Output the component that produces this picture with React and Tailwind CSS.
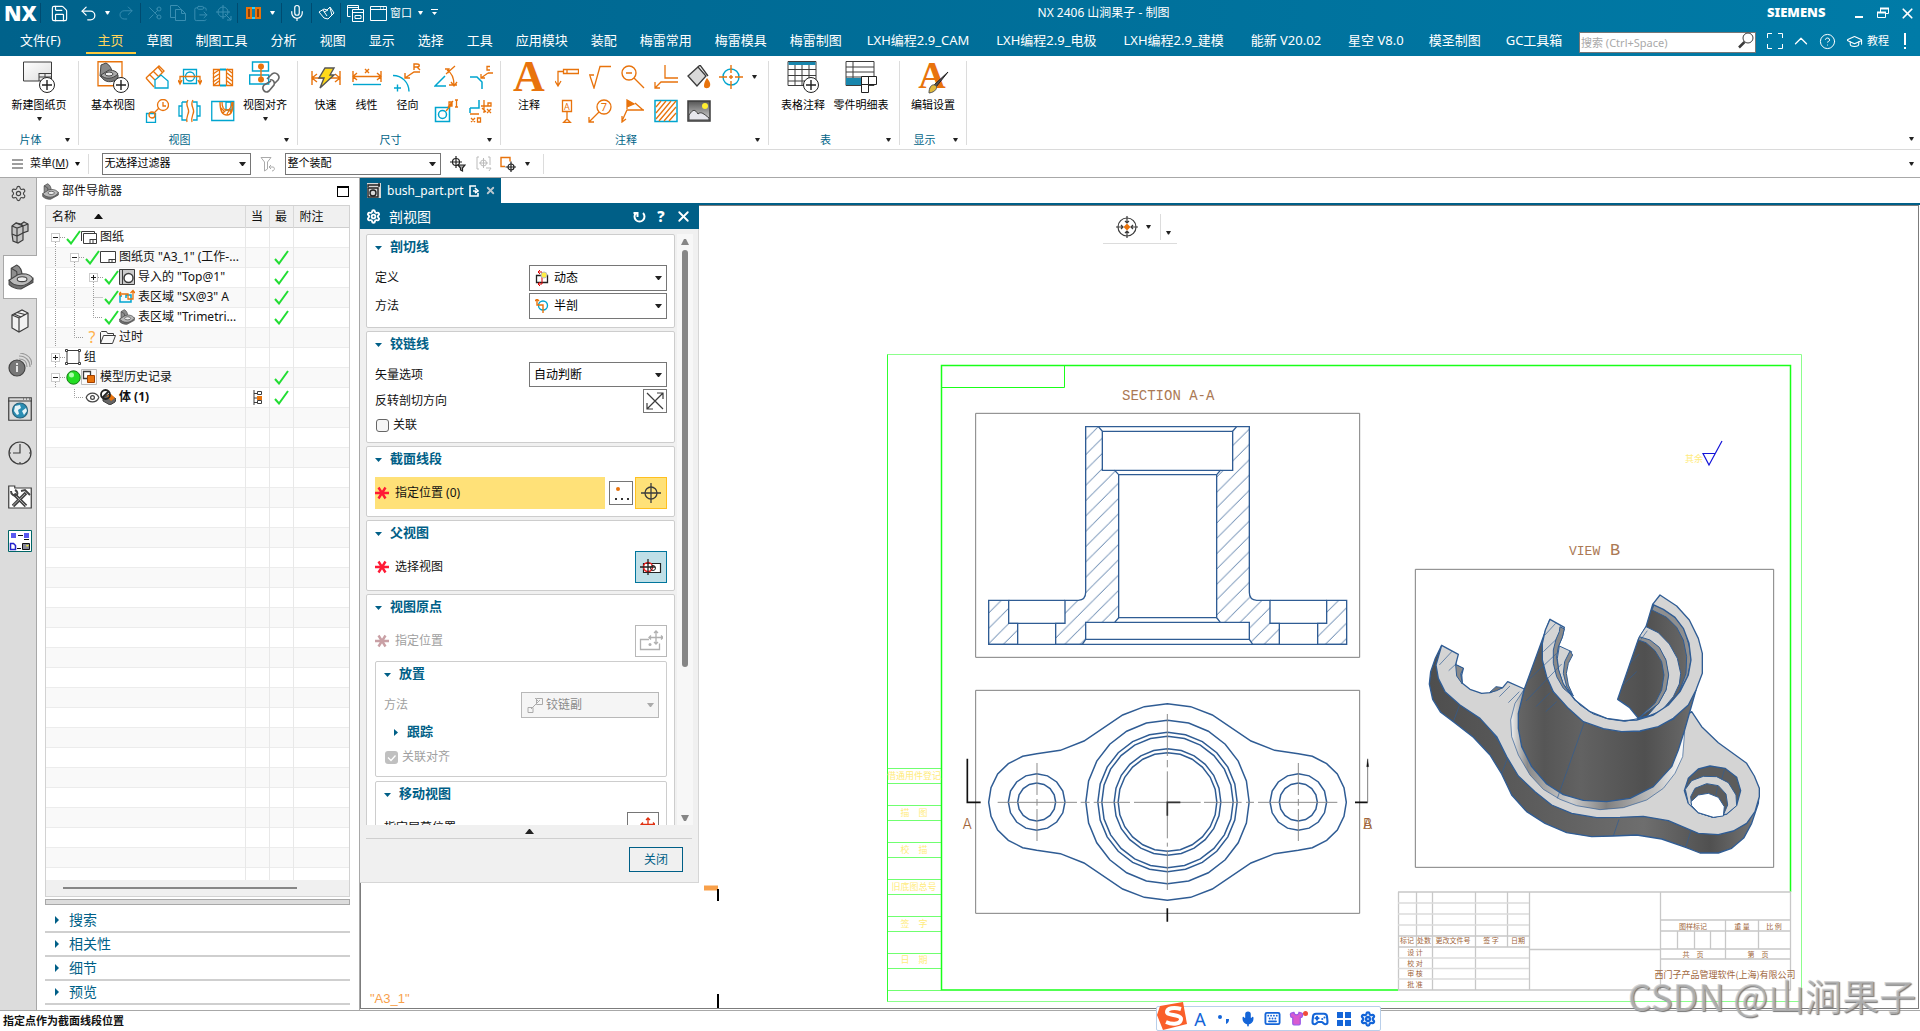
import React, { useState } from 'react'
import {
  Mic, Scissors, ClipboardPaste, Undo2, Redo2, Save, HelpCircle, GraduationCap,
  ChevronUp, Keyboard, Shirt, Settings, Gamepad2, Eye, X
} from 'lucide-react'

const O = '#e8730c'
const B = '#00a5cf'
const K = '#3c3c3c'
const BLUE = '#2f5c94'
const BROWN = '#a0663c'

const Ico = ({ w = 24, h = w, vb, stroke = K, sw = 1, className = '', children }) => (
  <svg width={w} height={h} viewBox={vb || `0 0 ${w} ${h}`} fill="none" stroke={stroke} strokeWidth={sw} className={`shrink-0 ${className}`} aria-hidden="true">
    {children}
  </svg>
)

const Caret = ({ className = 'text-[#222]' }) => (
  <svg width="5" height="4" viewBox="0 0 5 4" className={`shrink-0 ${className}`} aria-hidden="true">
    <path d="M0 0h5L3 3.5H2z" fill="currentColor" />
  </svg>
)

/* ---------- part bracket, used in several places ---------- */
const Bracket = ({ size = 16, className }) => (
  <Ico w={size} vb="0 0 24 24" stroke="#444" className={className}>
    <path d="M3 15V4l5-3c4 2 5 6 5 10l-5 4z" fill="#8d8d8d" />
    <path d="M3 4l5 3 1 8" />
    <path d="M1 15v4c3 3 7 4 11 4l11-6v-4z" fill="#707070" />
    <path d="M1 15l8-5 4-1c5 0 9 2 10 5-2 3-7 6-11 6-5 0-9-2-11-5z" fill="#b9b9b9" />
    <ellipse cx="13" cy="14" rx="4.500" ry="2.300" fill="#eee" />
  </Ico>
)

/* ---------- title bar ---------- */
const Sep = ({ className = 'w-[5px]' }) => (
  <span className={`flex shrink-0 justify-center ${className}`}><span className="h-5 w-px bg-[#004b70]" /></span>
)

const Tool = ({ label, className, children }) => (
  <button type="button" aria-label={label} className={`flex shrink-0 items-center justify-center ${className}`}>{children}</button>
)

function TitleBar() {
  return (
    <div className="flex h-[26px] items-center text-white">
      <span className="w-[39px] pl-1 text-[21px] leading-6 font-black">NX</span>
      <Sep className="w-[3px]" />
      <Tool label="保存" className="w-[34px]"><Save size={19} strokeWidth={1.5} /></Tool>
      <Tool label="撤销" className="w-6"><Undo2 size={19} strokeWidth={1.6} /></Tool>
      <Tool label="撤销列表" className="w-[14px]"><Caret className="text-white" /></Tool>
      <Tool label="重做" className="w-6 text-[#3a8fb2]"><Redo2 size={18} strokeWidth={1.2} /></Tool>
      <Sep />
      <Tool label="剪切" className="w-[23px] text-[#3a8fb2]"><Scissors size={16} strokeWidth={1.4} className="-scale-x-100" /></Tool>
      <Tool label="复制" className="w-[23px] text-[#3a8fb2]">
        <Ico w={16} stroke="currentColor"><path d="M5 12.500H.5v-12h7l3 3V4M5.500 4.500h6l4 4v7h-10zM11.500 4.500v4h4" /></Ico>
      </Tool>
      <Tool label="粘贴" className="w-[23px] text-[#3a8fb2]"><ClipboardPaste size={17} strokeWidth={1.4} /></Tool>
      <Tool label="移动" className="w-[23px]">
        <Ico w={16} stroke="#3a8fb2"><circle cx="7" cy="7" r="5" /><path d="M7 0v14M0 7h14M9 9l6 6M15 11v4h-4" /></Ico>
      </Tool>
      <Sep />
      <Tool label="剖视图" className="w-[26px]">
        <Ico w={15} h={12} stroke={O} className="bg-[#0b7fa8]">
          <path d="M1 1h4v10H1zM10 1h4v10h-4z" fill="#8a4208" strokeWidth="2" /><path d="M6 1h3M6 11h3" stroke="#28d0ff" strokeWidth="2" />
        </Ico>
      </Tool>
      <Tool label="最近命令" className="w-3"><Caret className="text-white" /></Tool>
      <Sep className="w-[7px]" />
      <Tool label="语音" className="w-6"><Mic size={18} strokeWidth={1.6} /></Tool>
      <Sep />
      <Tool label="触控" className="w-6">
        <Ico w={17} h={14} stroke="#fff"><path d="M1 6l5-3 3 1 3-3 4 6-6 6-4-1-5-6zM5 4l4 6M6 6l4-2M12 2l2 7" /></Ico>
      </Tool>
      <Sep />
      <Tool label="层叠窗口" className="w-6">
        <Ico w={17} stroke="#fff"><path d="M3.500 11.500H.5v-11h11V4M.5 2.500h11M5.500 4.500h11v12h-11zM5.500 7.500h11M8 10.500h6v3H8z" /></Ico>
      </Tool>
      <button type="button" className="flex shrink-0 items-center text-[11px]">
        <span className="flex w-[23px] justify-center">
          <Ico w={17} stroke="#fff"><path d="M.5 1.500h16v14H.5zM.5 4.500h16M10 3h1m2 0h1" /></Ico>
        </span>
        窗口
        <span className="flex w-4 justify-center"><Caret className="text-white" /></span>
      </button>
      <Tool label="自定义" className="w-3">
        <Ico w={7} h={8} stroke="none"><path d="M0 0h7v1H0zM1 3h5L3.500 6z" fill="#fff" /></Ico>
      </Tool>
      <h1 className="flex-1 text-center text-[12px]">NX 2406 山涧果子 - 制图</h1>
      <span className="w-20 text-[13px] font-black">SIEMENS</span>
      <div className="flex pr-px">
        <Tool label="最小化" className="w-6"><span className="mt-2 h-[2px] w-2 bg-white" /></Tool>
        <Tool label="还原" className="w-6">
          <Ico w={12} stroke="#fff"><path d="M3.500 5V1.500h8v5H9M.5 5.500h8v5h-8z" /><path d="M3 1.500h9M0 5.500h9" strokeWidth="2" /></Ico>
        </Tool>
        <Tool label="关闭窗口" className="w-6"><X size={17} strokeWidth={2.4} /></Tool>
      </div>
    </div>
  )
}

const tabs = [
  '主页', '草图', '制图工具', '分析', '视图', '显示', '选择', '工具', '应用模块', '装配', '梅雷常用', '梅雷模具',
  '梅雷制图', 'LXH编程2.9_CAM', 'LXH编程2.9_电极', 'LXH编程2.9_建模', '能新 V20.02', '星空 V8.0', '模圣制图', 'GC工具箱'
]

// tabs with latin letters get a little more room
const hasLatin = (t) => /[A-Z]/.test(t)

function MenuBar() {
  const [active, setActive] = useState('主页')
  return (
    <div className="flex h-[30px] text-white">
      <nav className="flex shrink-0 gap-[23px] pl-5 text-[13px] whitespace-nowrap">
        <button type="button" className="mr-[14px]">文件(F)</button>
        {tabs.map((t) => (
          <button key={t} type="button" onClick={() => setActive(t)} className={`relative ${hasLatin(t) ? 'px-[2px]' : ''} ${t === active ? 'text-[#ffd45c]' : ''}`}>
            {t}
            {t === active && <span className="absolute -inset-x-3 bottom-[2px] h-[2px] bg-[#ffc93c]" />}
          </button>
        ))}
      </nav>
      <div className="ml-auto flex shrink-0 items-center">
        <label className="relative block">
          <input type="search" placeholder="搜索 (Ctrl+Space)" aria-label="搜索" className="h-[21px] w-[177px] border border-[#777] bg-white pl-px text-[11px] text-black placeholder-[#a9a9a9]" />
          <Ico w={17} className="absolute top-[3px] right-[2px]"><circle cx="11" cy="6" r="5" /><path d="M7.500 10L2 15.500" strokeWidth="2.500" /></Ico>
        </label>
        <Tool label="全屏" className="w-[38px]">
          <Ico w={16} stroke="#fff"><path d="M.5 5V.5H5M11 .5h4.500V5M.5 11v4.500H5M11 15.500h4.500V11" /></Ico>
        </Tool>
        <Tool label="收起" className="w-[14px]"><ChevronUp size={22} strokeWidth={1.4} className="shrink-0" /></Tool>
        <Tool label="帮助" className="w-[38px]"><HelpCircle size={17} strokeWidth={1.4} /></Tool>
        <button type="button" className="flex items-center gap-1 text-[11px]">
          <GraduationCap size={17} strokeWidth={1.5} />
          教程
        </button>
        <Tool label="提示" className="w-[31px]">
          <Ico w={2} h={16} stroke="#fff" sw={2}><path d="M1 0v12M1 14v2" /></Ico>
        </Tool>
      </div>
    </div>
  )
}

/* ---------- ribbon ---------- */
const Plus = ({ x = 24, y = 24 }) => (
  <g><circle cx={x} cy={y} r="7.500" fill="#fff" stroke="#222" /><path d={`M${x - 5} ${y}h10M${x} ${y - 5}v10`} stroke="#222" strokeWidth="1.400" /></g>
)

const BigBtn = ({ label, icon, caret, className }) => (
  <button type="button" className={`flex shrink-0 flex-col items-center text-[11px] ${className}`}>
    {icon}
    <span className="mt-1 leading-4 whitespace-nowrap">{label}</span>
    {caret && <Caret className="mt-1 text-[#222]" />}
  </button>
)

const Group = ({ label, className, children }) => (
  <section className={`flex shrink-0 flex-col border-r border-[#dcdcdc] ${className}`}>
    <div className="flex flex-1 items-start">{children}</div>
    <div className="flex h-[10px] items-center pr-2 text-[11px] text-[#006487]">
      <span className="flex-1 pr-1 text-center">{label}</span>
      <button type="button" aria-label={`${label}选项`}><Caret /></button>
    </div>
  </section>
)

const IconGrid = ({ className, icons }) => (
  <div className={`grid grid-flow-col grid-rows-[32px_36px] ${className}`}>
    {icons.map(([name, icon]) => (
      <button key={name} type="button" aria-label={name} className="flex items-center justify-center">{icon}</button>
    ))}
  </div>
)

const viewIcons = [
  ['投影视图', <Ico stroke={O}><path d="M1 13L14 1l5 5-5 5M1 13l8 9M4 9l6 6M8 6l6 6M13 2l4 5" strokeWidth="1.300" /><path d="M10 15l6-5 7 6v7H10z" stroke={B} strokeWidth="1.300" fill="#fff" /></Ico>],
  ['局部放大图', <Ico stroke={O}><path d="M1.500 14.500h9v9h-9z" stroke={B} strokeWidth="1.300" /><circle cx="18" cy="6" r="5.500" strokeWidth="1.300" /><circle cx="7" cy="16" r="3" strokeWidth="1.300" /><path d="M9 14l5-5M18 3v4h3" strokeWidth="1.300" /></Ico>],
  ['剖视图', <Ico stroke={O} sw={1.3}><path d="M5.500 4.500h13v14h-13z" stroke={B} /><circle cx="12" cy="11.500" r="4.500" stroke={B} /><path d="M2 18v-6.500h20V18M0 15l2 4 2-4M20 15l2 4 2-4" /></Ico>],
  ['断开视图', <Ico stroke={B} sw={1.3}><path d="M1 7h3v10H1zM4 3h5M4 3v18h5M15 3h4v18h-4M19 7h3v10h-3" /><path d="M10 1c-4 6 3 9 0 14-1 3-2 5-1 8M15 1c-4 6 3 9 0 14-1 3-2 5-1 8" stroke={O} /></Ico>],
  ['展开剖', <Ico stroke={O} sw={1.3}><path d="M2.500 4.500h6v16h-6zM15.500 4.500h6v16h-6z" /><path d="M2 9l6-4M2 13l6-4M2 17l6-4M3 20l5-4M16 4l5 4M16 8l5 4M16 12l5 4M16 16l5 4" /><path d="M9 4.500h6M9 20.500h6" stroke={B} strokeWidth="2" /></Ico>],
  ['局部剖', <Ico stroke={B} sw={1.3}><path d="M.75 2.500h22v19h-22z" /><path d="M15 3h5v8h-5z" /><path d="M9 3c0 9 2 13 7 13s6-5 6-13M11 3c0 5 2 8 5 8s5-4 5-8M10 9l3 3M12 14l3-3M16 15l3-5M19 13l3-4" stroke={O} strokeWidth="1.300" /></Ico>]
]

const dimIcons = [
  ['角度', <Ico stroke={O} sw={1.3}><path d="M11 11L1 21h11" stroke={B} strokeWidth="1.500" /><path d="M12 9l9-8M13 5c5 3 7 8 7 15M11 4l4 0-1 4M17 17l3 4 3-4M15 20h8" /></Ico>],
  ['厚度', <Ico stroke={O} sw={1.3}><path d="M1.500 8.500h14v14h-14z" stroke={B} strokeWidth="1.500" /><circle cx="8.500" cy="15.500" r="4" stroke={B} strokeWidth="1.500" /><path d="M12 12l6-7M15 3h3v4h-3zM14 8l5-6M21 1h3M22.500 1v7M21 8h3" /></Ico>],
  ['倒斜角', <Ico stroke={O} sw={1.3}><path d="M1 12h7l5 5v7" stroke={B} strokeWidth="1.500" /><path d="M19 8l-7 5M24 8h-5M12 9v4h4M21 1.500h-3v3.500h3" /></Ico>],
  ['坐标', <Ico stroke={O} sw={1.3}><path d="M1 9h9V1M1 9v5" stroke={B} strokeWidth="1.500" /><path d="M15 1v13M12 7h9M1 15h9M2 19l4 4M6 19l-4 4M8.500 19h3v4h-3zM19 4h3v3h-3zM18 10l4 4M22 10l-4 4M13 9l4 4" /></Ico>]
]

const noteIcons = [
  ['特征控制框', <Ico stroke={O} sw={1.3}><path d="M8.500 4.500h15v4h-15zM12 4.500v4M8 6.500H3v14M0 16l3 5 3-5" /></Ico>],
  ['基准特征符号', <Ico stroke={O} sw={1.3}><path d="M7.500 1.500h9v11h-9zM12 13v8M8.500 23.500L12 20l3.500 3.500z" /><text x="12" y="10.500" fontSize="9" textAnchor="middle" fill={O} stroke="none">A</text></Ico>],
  ['表面粗糙度', <Ico stroke={O} sw={1.3}><path d="M1 10h5M2 11l4 12L12 1.500h11" /></Ico>],
  ['符号标注', <Ico stroke={O} sw={1.3}><circle cx="16" cy="8" r="7" /><path d="M11 13L1 23M1 18v5h5" /><text x="16" y="12" fontSize="11" textAnchor="middle" fill={O} stroke="none">7</text></Ico>],
  ['放大', <Ico stroke={O} sw={1.4}><circle cx="8" cy="8" r="7" /><path d="M5 8h6M13 13l10 10" /></Ico>],
  ['焊接符号', <Ico stroke={O} sw={1.3}><path d="M6 10V1l7 4-7 3z" fill={O} /><path d="M23 11H6L1 22M1 17v6l4-3M14 4l8 7" /></Ico>],
  ['目标点', <Ico stroke={O} sw={1.3}><path d="M11 0v13h13M1 23l6-6h17M1 17v6h5" /></Ico>],
  ['剖面线', <Ico stroke={O} sw={1.3}><path d="M1 1.500h22v21H1z" stroke={B} strokeWidth="1.500" /><path d="M2 8l5-6M2 14L12 2M2 20L17 2M5 22L22 2M10 22L22 8M15 22l7-8" /></Ico>],
  ['区域填充', <Ico><path d="M1 11L11 2l8 9-9 10z" fill="#d9d9d9" strokeWidth="1.300" /><path d="M11 2l2-2 8 11" strokeWidth="1.300" /><path d="M20 13c2 3 4 5 3 8-1 3-6 3-6 0s1-5 3-8z" fill={O} stroke="none" /></Ico>],
  ['图像', <Ico><defs><linearGradient id="sky" x2="0" y2="1"><stop stopColor="#555" /><stop offset="1" stopColor="#ddd" /></linearGradient></defs><path d="M1 2h22v20H1z" fill="url(#sky)" strokeWidth="1.500" /><circle cx="18" cy="7" r="3" fill="#ffee30" stroke="none" /><path d="M2 21V16c4-6 6-6 9-1 3-3 6 0 11 4v2z" fill="#e8e8ee" /></Ico>]
]

function Ribbon() {
  return (
    <div className="flex h-[94px] border-b border-[#dadada] bg-white pt-[5px] pb-1 text-black">
      <Group label="片体" className="w-[79px]">
        <BigBtn label="新建图纸页" caret className="w-full" icon={
          <Ico w={32}><defs><linearGradient id="pg" x2="1" y2="1"><stop stopColor="#fff" /><stop offset="1" stopColor="#ddd" /></linearGradient></defs>
            <path d="M.5 1h28v19H.5z" fill="url(#pg)" /><path d="M16 12.500h12M16 12v8M16 16h12M22 12v4" /><Plus /></Ico>
        } />
      </Group>
      <Group label="视图" className="w-[219px]">
        <BigBtn label="基本视图" className="ml-[7px] w-[54px]" icon={
          <Ico w={32} stroke="#444"><path d="M1 .75h24v24H1z" stroke={O} strokeWidth="1.300" /><path d="M4 4l5-2c4 2 6 6 6 10l-8 6-4-3z" fill="#888" /><path d="M4 15l8-5c5 0 8 2 9 4v4c-6 4-14 4-17-3z" fill="#777" /><path d="M4 14l8-5c5 0 8 2 9 4-5 5-13 6-17 1z" fill="#aaa" /><ellipse cx="12" cy="13" rx="4" ry="2" fill="#eee" /><Plus /></Ico>
        } />
        <IconGrid className="grid-cols-[33px_33px_33px]" icons={viewIcons} />
        <BigBtn label="视图对齐" caret className="w-[52px]" icon={
          <Ico w={32} stroke={B} sw={1.4}><path d="M3.500 1h16v9h-16zM.7 14h19v9H.7z" /><path d="M12 6v14" stroke={O} /><circle cx="12" cy="5.500" r="3" fill={O} stroke="none" /><circle cx="12" cy="18.500" r="3" fill={O} stroke="none" />
            <path d="M18 18l5-5c4-3 9 2 6 6l-4 4M22 20l-7 4c-3 4 1 9 5 6l5-6c1-3-1-6-4-5" stroke="#666" strokeWidth="1.600" /></Ico>
        } />
      </Group>
      <Group label="尺寸" className="w-[203px]">
        <BigBtn label="快速" className="ml-[7px] w-[41px]" icon={
          <Ico w={32} stroke={O} sw={1.4}><path d="M2 10v14M30 10v14M2 17h28M7 13l-5 4 5 4M25 13l5 4-5 4" /><path d="M15 7h9l-4 7h4L10 27l4-10H9z" fill="#ffd91a" stroke="#555" /></Ico>
        } />
        <BigBtn label="线性" className="w-[41px]" icon={
          <Ico w={32} stroke={O} sw={1.4}><path d="M2 10v11M30 10v11M2 15.500h28M6 12l-4 3.500 4 3.500M26 12l4 3.500-4 3.500M14 8l4 4M18 8l-4 4" /><path d="M2 23.500h28" stroke={B} /></Ico>
        } />
        <BigBtn label="径向" className="w-[41px]" icon={
          <Ico w={32} stroke={B} sw={1.4}><path d="M1 14.500c9 0 16 7 16 16M2 27h7M5.500 23.500v7" /><path d="M28 11h-6l-9 6M13 12v5h5M22 9V3h3c3 0 3 3 0 3h-3M25 6l3 3" stroke={O} /></Ico>
        } />
        <IconGrid className="grid-cols-[35px_35px]" icons={dimIcons} />
      </Group>
      <Group label="注释" className="w-[268px]">
        <BigBtn label="注释" className="ml-[7px] w-[42px]" icon={
          <Ico w={32} stroke="none" className="overflow-visible"><text x="16" y="30" textAnchor="middle" fontSize="44" fontWeight="bold" fontFamily="Liberation Serif, serif" fill={O}>A</text></Ico>
        } />
        <IconGrid className="grid-cols-[33px_33px_33px_33px_33px]" icons={noteIcons} />
        <button type="button" aria-label="中心标记" className="flex h-8 w-[31px] items-center justify-center">
          <Ico stroke={O} sw={1.4}><circle cx="12" cy="12" r="8" stroke={B} /><path d="M12 0v8M12 16v8M0 12h8M16 12h8M10 12h4M12 10v4" /></Ico>
        </button>
        <button type="button" aria-label="更多中心线" className="flex h-8 w-[11px] items-center justify-end"><Caret /></button>
      </Group>
      <Group label="表" className="w-[131px]">
        <BigBtn label="表格注释" className="ml-1 w-[60px]" icon={
          <Ico w={32}><path d="M1 .5h28v24H1zM1 8.500h28M1 14.500h28M1 20h28M8 4v20M15 4v20M22 4v20" /><path d="M1.500 1h27v3h-27z" fill="#1886ad" stroke="none" /><Plus /></Ico>
        } />
        <BigBtn label="零件明细表" className="w-[56px]" icon={
          <Ico w={32}><path d="M1 .5h28v24H1zM1 6h28M1 11h28M1 16h28M8 1v16" /><path d="M1 17h16v7H1z" fill="#1886ad" stroke="none" /><path d="M16.500 15.500h15v8h-8v8h-7z" fill="#fff" stroke="#222" /><path d="M16.500 23.500h7v-8" stroke="#222" /></Ico>
        } />
      </Group>
      <Group label="显示" className="w-[67px]">
        <BigBtn label="编辑设置" className="w-full" icon={
          <Ico w={32} stroke="none" className="overflow-visible"><text x="15" y="27" textAnchor="middle" fontSize="38" fontWeight="bold" fontFamily="Liberation Serif, serif" fill={O}>A</text>
            <path d="M31 11L19 26l-2-2z" fill="#555" stroke="#222" /><path d="M18 24c3 1 2 7-6 8 0-5 2-9 6-8z" fill="#e0b93a" stroke="#555" /></Ico>
        } />
      </Group>
      <button type="button" aria-label="功能区选项" className="ml-auto self-end pr-[6px] pb-1"><Caret /></button>
    </div>
  )
}

function Drop({ label, value, icon, pad = 'pl-2', disabled, className }) {
  return (
    <span className={`relative block shrink-0 ${className}`}>
      {icon && <span className="pointer-events-none absolute inset-y-0 left-[6px] flex items-center">{icon}</span>}
      <select
        aria-label={label}
        disabled={disabled}
        className={`h-full w-full appearance-none border text-left ${pad} ${disabled ? 'border-[#b8b8b8] bg-[#f5f5f5] text-[#8a8a8a]' : 'border-[#767676] bg-transparent text-black'}`}
      >
        <option>{value}</option>
      </select>
      <svg width="7" height="4" viewBox="0 0 7 4" className="pointer-events-none absolute top-1/2 right-[5px] -mt-[2px]" aria-hidden="true">
        <path d="M0 0h7L4 4H3z" fill={disabled ? '#aaa' : '#222'} />
      </svg>
    </span>
  )
}

function SelectionBar() {
  return (
    <div className="flex h-[27px] shrink-0 items-center bg-white text-[11px]">
      <button type="button" className="flex items-center pl-3">
        <Ico w={11} h={10} className="mr-[7px]"><path d="M0 1h11M0 5h11M0 9h11" /></Ico>
        菜单(<u>M</u>)
        <Caret className="ml-[6px]" />
      </button>
      <span className="mx-2 h-5 w-px bg-[#dcdcdc]" />
      <Drop label="类型过滤器" value="无选择过滤器" className="ml-[5px] h-[22px] w-[149px] text-[11px]" pad="pl-[2px]" />
      <Tool label="重置过滤器" className="w-[34px]">
        <Ico w={16} stroke="#aaa"><path d="M1 1.500h10L7.500 6v7l-3 2V6zM9 11h4c2 0 2 4-1 4M11 9l-2 2 2 2" /></Ico>
      </Tool>
      <Drop label="选择范围" value="整个装配" className="h-[22px] w-[156px] text-[11px]" pad="pl-[2px]" />
      <Tool label="捕捉点" className="w-[34px]">
        <Ico w={16} stroke="#222" sw={1.2}><circle cx="6" cy="6" r="3.500" /><path d="M6 0v12M0 6h12" /><path d="M8 9h7l-2.500 3v3l-2-1v-2z" fill="#aaa" /></Ico>
      </Tool>
      <Tool label="选择定位" className="w-[18px]">
        <Ico w={16} stroke="#bbb"><path d="M3 1H1v12h2M12 1h2v8" /><circle cx="7.500" cy="7" r="3" /><path d="M7.500 2v10M3 7h9M10 12h5l-2 3" /></Ico>
      </Tool>
      <Tool label="工作区" className="w-[30px]">
        <Ico w={16} stroke={O} sw={1.4}><path d="M5 10.500H1v-9h9v4" /><g stroke="#222" strokeWidth="1.200"><circle cx="11" cy="11" r="3" fill="#fff" /><path d="M11 5.500v10.500M5.500 11H16" /></g></Ico>
      </Tool>
      <Tool label="工作区选项" className="w-[10px]"><Caret /></Tool>
      <span className="ml-[10px] h-5 w-px bg-[#dcdcdc]" />
      <button type="button" aria-label="工具条选项" className="ml-auto pr-[6px]"><Caret /></button>
    </div>
  )
}

/* ---------- resource bar ---------- */
const resources = [
  ['装配导航器', <Ico w={18} h={24} sw={1.2}><path d="M1 5l4-3 5 1 3-2 4 2v7l-5 2v7l-5 3-5-2-1-7z" fill="#c4c4c4" /><path d="M1 5l5 2 6-2 5-2M6 7v15M1 13l5 2 6-3M12 5v7M5 2l7 3M10 3l2 2" /></Ico>],
  ['部件导航器', <Bracket size={26} />],
  ['重用库', <Ico w={18} h={24} sw={1.2}><path d="M1 6l10-5 6 3v14l-9 5-7-4z" fill="#f1f1f1" /><path d="M1 6l7 3v14M8 9l9-5M3 5l7 3M6 3.500l8 2" /></Ico>],
  ['HD3D 工具', <Ico w={24} sw={1.2}><path d="M11 3c7 0 11 5 11 11M12 0c8 1 12 6 12 12M11 6c5 0 8 3 8 8" stroke="#999" /><circle cx="9" cy="15" r="8" fill="#777" stroke="#444" /><path d="M9 13v6M9 10v2" stroke="#fff" strokeWidth="1.600" /></Ico>],
  ['Web 浏览器', <Ico w={24} sw={1.2}><path d="M.75.75h22.500v22.500H.75z" /><path d="M0 4h24M15 2h1m2 0h1m2 0h1" /><circle cx="12" cy="13.500" r="7.500" fill="#2a8eb4" stroke="#27627c" /><path d="M7 9l5-1 1 3-3 2 1 4-2 1-3-4zM14 14l4-3 1 3-3 4z" fill="#e6f4f8" stroke="none" /></Ico>],
  ['历史记录', <Ico w={24} sw={1.2}><circle cx="12" cy="12" r="11" /><path d="M12 3v9H5M12 21v2M21 12h2M1 12h2" /></Ico>],
  ['加工向导', <Ico w={24} sw={1.2}><path d="M.75 2.500V1h6v2h16.500v20H.75z" fill="#fff" /><path d="M5 21L18 8M6 9l12 12" stroke="#444" strokeWidth="3.500" /><path d="M5 20.500L17 9M7 10l11 11" stroke="#aaa" strokeWidth="1" /><path d="M13 6l4-1 5 5M3 6c0 4 3 5 6 4 1-2 0-4-2-5" stroke="#444" strokeWidth="2" /></Ico>],
  ['角色', <Ico w={24} h={22} stroke="#111"><path d="M.5.5h23v21H.5z" fill="#fff" stroke="#066" /><path d="M3 3h5v5H3zM16 3h5v5h-5z" fill="#5a5af0" stroke="none" /><path d="M10 5.500h5M9 18.500h4M16 9.500h5" /><path d="M2.500 13.500h3l2 2v4h-5z" stroke="#22c" strokeWidth="1.500" /><path d="M14.500 13.500h7v6h-7z" fill="#889" /><path d="M18 15l3 0-2 2z" fill="#ee3" stroke="none" /></Ico>]
]

function ResourceBar() {
  return (
    <aside className="flex w-[37px] shrink-0 flex-col items-center border-r border-[#a8a8a8] bg-[#dcdcdc]">
      <button type="button" aria-label="设置" className="flex h-[33px] w-full items-center justify-center pb-[3px]">
        <Settings size={17} strokeWidth={1.6} color="#444" />
      </button>
      {resources.map(([name, icon], i) => (
        <button key={name} type="button" aria-label={name} className={`flex h-11 items-center justify-center ${i === 1 ? '-mr-px w-[34px] self-end border border-r-0 border-[#a8a8a8] bg-white' : 'w-full pl-[3px]'}`}>
          {icon}
        </button>
      ))}
    </aside>
  )
}

/* ---------- part navigator ---------- */
const Check = () => (
  <Ico w={15} stroke="#22dd33" sw={2}><path d="M1 9l4 4.500L14 1" /></Ico>
)

const Guide = ({ kind }) => (
  <Ico w={19} h={20} stroke="#9a9a9a">
    {kind === 'v' && <path d="M9.500 0v20" strokeDasharray="1 1" />}
    {kind === 't' && <path d="M9.500 0v20M9.500 10.500H19" strokeDasharray="1 1" />}
    {kind === 'l' && <path d="M9.500 0v10.500H19" strokeDasharray="1 1" />}
    {'+-'.includes(kind) && kind !== '' && (
      <>
        <path d="M9.500 15v5M14 10.500h5" strokeDasharray="1 1" />
        <rect x="5.500" y="6.500" width="8" height="8" fill="#fff" stroke="#ccc" />
        <path d={kind === '+' ? 'M7 10.500h5M9.500 8v5' : 'M7 10.500h5'} stroke="#222" />
      </>
    )}
  </Ico>
)

const Sheet = ({ stack }) => (
  <Ico w={16}>
    {stack && <path d="M.5 12V2.500h13V4" />}
    <path d={stack ? 'M2.500 4.500h13v10h-13z' : 'M.5 2.500h15v11H.5z'} fill="#fff" /><path d="M9 10.500h6M9 10v4M12 10v4" />
  </Ico>
)

const tree = [
  { g: ['-'], mark: <Check />, icon: <Sheet stack />, text: '图纸' },
  { g: ['v', '-'], mark: <Check />, icon: <Sheet />, text: '图纸页 "A3_1" (工作-...', latest: true },
  { g: ['v', 'v', '+'], mark: <Check />, icon: <Ico w={16}><path d="M.5.5h15v15H.5z" fill="#ccc" /><path d="M3.500 1v14" /><circle cx="9.500" cy="9" r="4.500" fill="#fff" strokeWidth="1.500" /></Ico>, text: '导入的 "Top@1"', latest: true },
  { g: ['v', 'v', 't'], mark: <Check />, icon: <Ico w={16} stroke={B} sw={1.5}><path d="M3 7H1v6h11V6H7v3" /><path d="M0 5h9v5h5V2M11.500 4l2.500-2.500L16 4M2 3L0 5l2 2" stroke={O} strokeWidth="1.300" /></Ico>, text: '表区域 "SX@3" A', latest: true },
  { g: ['v', 'v', 'l'], mark: <Check />, icon: <Bracket />, text: '表区域 "Trimetri...', latest: true },
  { g: ['v', 'l'], mark: <span className="text-[16px] leading-[18px] text-[#ffb04a]">?</span>, icon: <Ico w={16}><path d="M.5 14.500v-11l1-1h5l1 2h6v2M.5 14.500l3-8h12l-3 8z" /></Ico>, text: '过时' },
  { g: ['+'], icon: <Ico w={16}><path d="M2 1.500h12v13H2z" /><path d="M.5.5h2v2h-2zM13.500.5h2v2h-2zM.5 13.500h2v2h-2zM13.500 13.500h2v2h-2z" fill="#fff" /></Ico>, text: '组' },
  { g: ['-'], mark: <Ico w={15}><circle cx="7.500" cy="7.500" r="6.700" fill="#22dd22" stroke="#157a15" /><circle cx="5.500" cy="5" r="2.500" fill="#aaffaa" stroke="none" /></Ico>, icon: <Ico w={16}><path d="M.5.5h15v15H.5z" stroke="#bbb" /><path d="M2.500 2.500h7v7h-7z" fill="#fff" strokeWidth="1.300" /><path d="M6.500 6.500h7v7h-7z" fill={O} stroke="#a04000" /></Ico>, text: '模型历史记录', latest: true },
  { g: ['', 'l'], mark: <Eye size={15} strokeWidth={2} color="#444" fill="#fff" />, icon: <Ico w={16}><path d="M3 9l6-4 7 5-1 3-5 3-7-4z" fill="#666" /><path d="M7 7l4-2 4 4-4 3z" fill={O} stroke="none" /><circle cx="5.500" cy="5.500" r="4.500" strokeWidth="1.800" stroke="#222" /><path d="M2.500 8.500l6-6" strokeWidth="1.800" stroke="#222" /></Ico>, text: '体 (1)', bold: true, current: true, latest: true }
]

const blankRows = Array.from({ length: 24 })

function Navigator() {
  return (
    <section className="flex w-[323px] shrink-0 flex-col border-r border-[#a8a8a8] bg-white pr-[9px] pl-2 text-[12px]">
      <header className="flex h-[27px] shrink-0 items-center pr-px pb-px">
        <Bracket size={17} className="-ml-[3px]" />
        <h2 className="ml-[3px] flex-1">部件导航器</h2>
        <button type="button" aria-label="最大化面板" className="h-[11px] w-3 border border-t-2 border-black" />
      </header>
      <div className="flex min-h-0 flex-1 flex-col border border-[#d2d2d2]">
        <div className="min-h-0 flex-1 overflow-hidden">
          <table className="w-full table-fixed border-collapse">
            <colgroup>
              <col />
              <col className="w-6" />
              <col className="w-6" />
              <col className="w-14" />
            </colgroup>
            <thead>
              <tr className="h-[21px] border-b border-[#cfcfcf] bg-[#f0f0f0] text-left">
                <th className="border-r border-[#d8d8d8] pt-px pl-[6px] font-normal">
                  <span className="flex items-center gap-[18px]">名称<Ico w={9} h={5} stroke="none"><path d="M0 5h9L5 0H4z" fill="#111" /></Ico></span>
                </th>
                <th className="border-r border-[#d8d8d8] pt-px text-center font-normal">当</th>
                <th className="border-r border-[#d8d8d8] pt-px text-center font-normal">最</th>
                <th className="pt-px pl-[6px] font-normal">附注</th>
              </tr>
            </thead>
            <tbody>
              {tree.map((r) => (
                <tr key={r.text} className="h-5 border-b border-[#ececec] even:bg-[#f9f9f9]">
                  <td className="border-r border-[#e8e8e8] p-0">
                    <div className="flex h-[19px] items-center overflow-hidden">
                      {r.g.map((k, i) => <Guide key={i} kind={k} />)}
                      {r.mark && <span className="flex w-4 shrink-0 justify-center">{r.mark}</span>}
                      {r.icon}
                      <span className={`ml-[3px] whitespace-nowrap ${r.bold ? 'font-bold' : ''}`}>{r.text}</span>
                    </div>
                  </td>
                  <td className="border-r border-[#e8e8e8] p-0">
                    {r.current && (
                      <Ico w={9} h={15} className="mx-auto"><path d="M1 0v15M1 3.500h3M1 12.500h3M1 8h3" /><path d="M4.500 1.500h4v3h-4zM4.500 10.500h4v3h-4z" /><path d="M4 6h5v4H4z" fill={O} stroke="none" /></Ico>
                    )}
                  </td>
                  <td className="border-r border-[#e8e8e8] p-0"><div className="flex justify-center">{r.latest && <Check />}</div></td>
                  <td />
                </tr>
              ))}
              {blankRows.map((_, i) => (
                <tr key={i} className="h-5 border-b border-[#ececec] even:bg-[#f9f9f9]">
                  <td className="border-r border-[#e8e8e8]" />
                  <td className="border-r border-[#e8e8e8]" />
                  <td className="border-r border-[#e8e8e8]" />
                  <td />
                </tr>
              ))}
            </tbody>
          </table>
        </div>
        <div className="h-4 shrink-0 bg-[#f0f0f0] pt-[7px] pr-[52px] pl-[17px]"><div className="h-[2px] bg-[#868686]" /></div>
      </div>
      <div className="mt-[2px] h-[6px] shrink-0 border border-[#a8a8a8] bg-[#dcdcdc]" />
      <div className="shrink-0 pt-1 pb-[5px] text-[14px] text-[#005f87]">
        {['搜索', '相关性', '细节', '预览'].map((t) => (
          <button key={t} type="button" className="flex h-6 w-full items-center gap-[10px] border-b-2 border-[#cfcfcf] pl-[10px] leading-5">
            <Ico w={4} h={8} stroke="none"><path d="M0 0v8l4-4z" fill="#005f87" /></Ico>
            {t}
          </button>
        ))}
      </div>
    </section>
  )
}

/* ---------- section view dialog ---------- */
const Star = ({ color = '#ff1a35' }) => (
  <Ico w={14} stroke={color} sw={2.4}><path d="M0 7h14M3.500 1.500l7 11M10.500 1.500l-7 11" /></Ico>
)

const Head = ({ closed, className = '', children }) => (
  <h3 className={`flex h-[26px] items-center pb-[2px] text-[13px] font-bold text-[#005f87] ${className}`}>
    <Ico w={7} stroke="none" className="mr-2"><path d={closed ? 'M2 0v7l4-3.500z' : 'M0 2h7L3.500 6z'} fill="#005f87" /></Ico>
    {children}
  </h3>
)

const Panel = ({ className = '', children }) => (
  <section className={`rounded-xs border border-[#cdcdcd] bg-white pr-[7px] pl-2 ${className}`}>{children}</section>
)

const MoveIcon = ({ color, accent }) => (
  <Ico w={24} stroke={color} sw={1.3}><path d="M10 10.500H1.500v10h19v-6" /><circle cx="11" cy="15.500" r="1.500" fill={color} stroke="none" /><path d="M17 2v13M10.500 8.500h13M15 4l2-2 2 2M15 13l2 2 2-2M12 6.500l-2 2 2 2M22 6.500l2 2-2 2" stroke={accent || color} /></Ico>
)

function SectionDialog() {
  const [assoc, setAssoc] = useState(false)
  return (
    <div role="dialog" aria-label="剖视图" className="absolute top-[25px] left-0 flex w-[339px] flex-col border-r border-b border-[#d6d6d6] bg-[#f0f0f0] text-[12px]">
      <header className="-mr-px flex h-[26px] items-center bg-[#005f87] pr-[7px] pl-[6px] text-white">
        <Settings size={15} strokeWidth={3} />
        <h2 className="ml-2 flex-1 text-[14px]">剖视图</h2>
        <button type="button" aria-label="重置" className="flex w-4"><Ico w={13} stroke="#fff" sw={2}><path d="M10 3a5 5 0 1 1-7 0M.5 3h4v4" /></Ico></button>
        <button type="button" aria-label="帮助" className="w-6 text-[15px] leading-5 font-extrabold">?</button>
        <button type="button" aria-label="关闭对话框" className="ml-[2px]"><X size={17} strokeWidth={2.6} /></button>
      </header>
      <div className="flex h-[596px] pt-[5px] pl-[6px]">
        <div className="flex w-[309px] shrink-0 flex-col gap-[3px] overflow-hidden">
          <Panel className="shrink-0 pb-2">
            <Head>剖切线</Head>
            <div className="mt-1 flex items-center justify-between">
              <span>定义</span>
              <Drop label="定义" value="动态" pad="pl-6" className="h-[26px] w-[138px]" icon={<Ico w={14} h={16} stroke="#222"><path d="M1.500 5.500h11v7h-11z" strokeWidth="1.300" /><path d="M3 2h4v12H3M5 0L3 2l2 2M5 12l-2 2 2 2" stroke="#d00" /><circle cx="9" cy="5" r="3" fill="#ffee44" stroke="#bbb" /></Ico>} />
            </div>
            <div className="mt-[2px] flex items-center justify-between">
              <span>方法</span>
              <Drop label="剖切方法" value="半剖" pad="pl-6" className="h-[26px] w-[138px]" icon={<Ico w={14} stroke={B} sw={1.4}><circle cx="8" cy="6.500" r="4.500" /><path d="M2 0v6h6v8M0 2l2-2 2 2" stroke={O} /></Ico>} />
            </div>
          </Panel>
          <Panel className="shrink-0 pb-[9px]">
            <Head>铰链线</Head>
            <div className="mt-1 flex items-center justify-between">
              <span>矢量选项</span>
              <Drop label="矢量选项" value="自动判断" pad="pl-1" className="h-[25px] w-[138px]" />
            </div>
            <div className="mt-[2px] flex items-center justify-between">
              <span>反转剖切方向</span>
              <button type="button" aria-label="反转剖切方向" className="flex size-6 items-center justify-center border border-[#767676]">
                <Ico w={18}><path d="M1 1l16 16M1 17L17 1M11 1h6v6M7 17H1v-6" strokeWidth="1.200" /></Ico>
              </button>
            </div>
            <label className="mt-1 flex h-4 items-center gap-1">
              <input type="checkbox" checked={assoc} onChange={(e) => setAssoc(e.target.checked)} className="ml-px size-[13px] appearance-none rounded-[3px] border border-[#666] bg-[#f6f6f6] checked:bg-[#005f87]" />
              关联
            </label>
          </Panel>
          <Panel className="shrink-0 pb-[7px]">
            <Head>截面线段</Head>
            <div className="mt-1 flex h-8 items-center">
              <span className="mr-1 flex h-full flex-1 items-center gap-[6px] bg-[#ffe178]"><Star />指定位置 (0)</span>
              <button type="button" aria-label="点对话框" className="flex size-6 items-center justify-center border border-[#767676]">
                <Ico w={18} stroke="none"><circle cx="6" cy="5" r="2" fill={O} /><path d="M3 14h2v2H3zM9 14h2v2H9zM15 14h2v2h-2z" fill="#333" /></Ico>
              </button>
              <button type="button" aria-label="指定点" className="ml-[2px] flex size-8 items-center justify-center border border-[#ffc020] bg-[#ffe178]">
                <Ico w={22}><circle cx="11" cy="11" r="6" strokeWidth="1.300" /><path d="M11 1v20M1 11h20" strokeWidth="1.300" /></Ico>
              </button>
            </div>
          </Panel>
          <Panel className="shrink-0 pb-[7px]">
            <Head>父视图</Head>
            <div className="mt-1 flex h-8 items-center gap-[6px]">
              <Star /><span className="flex-1">选择视图</span>
              <button type="button" aria-label="选择视图" className="flex size-8 items-center justify-center border border-[#00759c] bg-[#bfdfe7]">
                <Ico w={24} stroke="#222"><path d="M4.500 8.500h17v9h-17z" fill="#fff" strokeWidth="1.200" /><circle cx="9" cy="12" r="4.500" stroke="#e22" strokeWidth="1.500" /><circle cx="14" cy="13" r="2.500" /><path d="M9 4v16M1 12h15" strokeWidth="1.300" /></Ico>
              </button>
            </div>
          </Panel>
          <Panel className="shrink-0">
            <Head>视图原点</Head>
            <div className="mt-1 flex h-8 items-center gap-[6px] text-[#a0a0a0]">
              <Star color="#c9a0a5" /><span className="flex-1">指定位置</span>
              <button type="button" disabled aria-label="指定视图位置" className="flex size-8 items-center justify-center border border-[#b8b8b8]"><MoveIcon color="#b0b0b0" /></button>
            </div>
            <Panel className="mt-1 pb-2">
              <Head>放置</Head>
              <div className="mt-1 flex items-center justify-between text-[#a0a0a0]">
                <span>方法</span>
                <Drop label="放置方法" value="铰链副" pad="pl-6" disabled className="h-[26px] w-[138px]" icon={<Ico w={16} stroke="#aaa"><path d="M1 10.500h5v5H1zM9.500 1.500h6v6h-6zM4 12l9-9M8 1l3 3" /></Ico>} />
              </div>
              <Head closed className="mt-[2px] ml-2">跟踪</Head>
              <label className="flex h-[22px] items-center gap-1 text-[#a0a0a0]">
                <span className="relative ml-px flex size-[13px]">
                  <input type="checkbox" checked disabled readOnly className="size-[13px] appearance-none rounded-[3px] bg-[#c0c0c0]" />
                  <Ico w={13} stroke="#fff" sw={1.3} className="pointer-events-none absolute inset-0"><path d="M3 6.500l3 3 4.500-5" /></Ico>
                </span>
                关联对齐
              </label>
            </Panel>
            <Panel className="mt-1 pb-2">
              <Head>移动视图</Head>
              <div className="mt-1 flex items-center justify-between">
                <span>指定屏幕位置</span>
                <button type="button" aria-label="指定屏幕位置" className="flex size-8 items-center justify-center border border-[#767676]"><MoveIcon color="#555" accent="#e03010" /></button>
              </div>
            </Panel>
          </Panel>
        </div>
        <div className="ml-[2px] flex w-4 flex-col items-center bg-[#f7f7f7] pt-[5px] pb-1">
          <Ico w={8} h={6} stroke="none"><path d="M0 6h8L5 0H3z" fill="#868686" /></Ico>
          <div className="mt-[5px] h-[417px] w-[6px] rounded-full bg-[#868686]" />
          <Ico w={8} h={6} stroke="none" className="mt-auto"><path d="M0 0h8L5 6H3z" fill="#868686" /></Ico>
        </div>
      </div>
      <footer className="mx-[6px] flex flex-col pb-[10px]">
        <button type="button" aria-label="收起对话框" className="flex h-[14px] items-center justify-center border-b border-[#cfcfcf]">
          <Ico w={9} h={5} stroke="none"><path d="M0 5h9L5 0H4z" fill="#222" /></Ico>
        </button>
        <button type="button" className="mt-2 mr-[9px] h-[25px] w-[54px] self-end border border-[#005f87] text-[#005f87]">关闭</button>
      </footer>
    </div>
  )
}

/* ---------- drawing sheet ---------- */
const ngon = (cx, cy, r, n) =>
  Array.from({ length: n }, (_, i) => {
    const a = (i * 2 * Math.PI) / n
    return `${(cx + r * Math.sin(a)).toFixed(1)},${(cy - r * Math.cos(a)).toFixed(1)}`
  }).join(' ')

function SectionAA() {
  const left = 'M437 200H475L487 214V331H524L536 344V773L524 787H437V838L427 853H347V790H375V721H415Q437 720 437 697Z'
  const ear = 'M146 721H206V790H233V853H146Z'
  const right = 'M928 200H890L878 214V331H841L830 344V773L841 787H928V838L938 853H1018V790H990V721H950Q928 720 928 697Z'
  const ear2 = 'M1220 721H1160V790H1133V853H1220Z'
  return (
    <g transform="translate(940 360) scale(0.33333)">
      <path d="M107 160H1259V892H107Z" stroke="#808080" strokeWidth="3" />
      <pattern id="hatch" width="46" height="46" patternUnits="userSpaceOnUse">
        <path d="M-1 32L32 -1M30 47L47 30" stroke={BLUE} strokeWidth="2.500" />
      </pattern>
      <g stroke={BLUE} strokeWidth="4">
        {[left, ear, right, ear2].map((d) => <path key={d} d={d} fill="url(#hatch)" />)}
        <path d="M475 200H890M487 214H878M524 331H841M536 344H830M536 773H830M524 787H841M437 838H928M146 853H1220M206 721H375M990 721H1160M206 790H375M990 790H1160" />
      </g>
    </g>
  )
}

function TopView() {
  const top = [[326, 397], [333, 353], [353, 312], [385, 281], [428, 259], [470, 251], [541, 241], [612, 213], [728, 135], [793, 110], [862, 101]]
  const half = [...top, ...top.slice(0, -1).reverse().map(([x, y]) => [1725 - x, y])]
  const outline = [...half, ...half.slice(1, -1).reverse().map(([x, y]) => [x, 792 - y])].map((p) => p.join(',')).join(' ')
  return (
    <g transform="translate(880 670) scale(0.33333)">
      <path d="M287 61H1439V730H287Z" stroke="#808080" strokeWidth="3" />
      <g stroke={BLUE} strokeWidth="4.500">
        <polygon points={outline} />
        {[245, 209, 197, 160, 148].map((r) => <polygon key={r} points={ngon(862.5, 396, r, 24)} />)}
        {[470, 1255].map((x) => [85, 57].map((r) => <polygon key={`${x}-${r}`} points={ngon(x, 396, r, 16)} />))}
      </g>
      <g stroke="#8c8c8c" strokeWidth="3">
        <path d="M353 397H591M602 397H629M641 397H750M762 397H962M972 397H1085M1098 397H1122M1134 397H1372" />
        <path d="M862 132V258M862 270V292M862 304V505M862 518V530M862 540V660M471 279V375M471 387V407M471 417V513M1255 279V375M1255 387V407M1255 417V513" />
      </g>
      <g stroke="#111" strokeWidth="5">
        <path d="M262 266V397H302M1425 397H1463M862 715V755" />
        <path d="M862 437V397H901" stroke="#333" />
        <path d="M1463 397V266" strokeWidth="2.500" stroke="#666" />
        <path d="M1463 268l-3 22h6z" strokeWidth="1" fill="#111" />
      </g>
      <g fill={BROWN} fontSize="42" textAnchor="middle" fontFamily="Inter, sans-serif" fontWeight="300">
        <text x="262" y="477">A</text>
        <text x="1463" y="477">A</text>
        <text x="1463" y="477">B</text>
      </g>
    </g>
  )
}

function Isometric() {
  return (
    <g transform="translate(1390 540) scale(0.33333)" strokeLinejoin="round">
      <defs>
        <linearGradient id="wall" x1="380" x2="930" y1="0" y2="0" gradientUnits="userSpaceOnUse">
          <stop stopColor="#666" /><stop offset="0.150" stopColor="#565656" /><stop offset="0.350" stopColor="#626262" />
          <stop offset="0.700" stopColor="#505050" /><stop offset="0.900" stopColor="#646464" /><stop offset="1" stopColor="#777" />
        </linearGradient>
        <linearGradient id="side" x1="118" x2="1108" y1="0" y2="0" gradientUnits="userSpaceOnUse">
          <stop stopColor="#4e4e4e" /><stop offset="0.350" stopColor="#5e5e5e" /><stop offset="0.650" stopColor="#6e6e6e" />
          <stop offset="0.850" stopColor="#505050" /><stop offset="0.970" stopColor="#707070" /><stop offset="1" stopColor="#aaa" />
        </linearGradient>
        <linearGradient id="fillet" x1="360" x2="885" y1="0" y2="0" gradientUnits="userSpaceOnUse">
          <stop stopColor="#f5f5f5" /><stop offset="0.100" stopColor="#8a8a8a" /><stop offset="0.350" stopColor="#cfcfcf" />
          <stop offset="0.550" stopColor="#808080" /><stop offset="0.850" stopColor="#c8c8c8" /><stop offset="1" stopColor="#fff" />
        </linearGradient>
      </defs>
      <path d="M76 88H1151V982H76Z" stroke="#808080" strokeWidth="3" />
      <g stroke={BLUE} strokeWidth="4">
        {/* flange */}
        <path fill="url(#side)" d="M155 316L136 355 122 395 118 432 128 478 152 517 190 545 250 592 300 645 335 702 365 765 410 815 465 850 530 878 605 890 670 888 740 885 815 897 887 922 930 939 985 939 1025 925 1062 893 1085 850 1105 790 1108 745 1080 800 985 870 760 815 560 810 400 700 250 500 175 440Z" />
        <path fill="#d4d4d4" d="M155 316L205 343 197 374 220 385 215 405 217 430 240 448 275 460 300 458 320 448 338 443 353 425 403 447 640 700 905 515 935 560 985 608 1070 670 1093 708 1108 745 1108 770 1095 815 1070 850 1030 873 985 884 925 880 835 842 760 829 690 832 620 833 545 820 485 795 435 755 385 708 350 650 320 590 270 535 210 495 165 455 145 415 138 375Z" />
        <path fill="#8a8a8a" strokeWidth="3" d="M197 374L220 385 212 402 217 432 200 408Z" />
        <path fill="#777" strokeWidth="3" d="M298 458L318 440 338 443 320 452Z" />
        <path strokeWidth="2" d="M208 497L190 545M352 655L335 702M687 838L670 888M903 872L887 922" />
        {/* blend and outer wall */}
        <path fill="url(#fillet)" strokeWidth="2" d="M403 447L375 490 362 540 365 590 385 645 420 705 460 748 510 778 560 797 630 809 700 803 770 780 820 745 855 700 878 650 884 575 700 650Z" />
        <path fill="url(#wall)" d="M480 238L462 285 403 447 385 520 385 565 395 620 425 680 470 732 520 764 580 781 650 785 720 775 790 740 845 680 865 630 884 570 918 450 850 537 750 573 640 566 540 508 490 455 462 380 462 300Z" />
        {/* bore behind the left cut */}
        <path fill="#d4d4d4" strokeWidth="3" d="M508 318L545 335 530 362 522 395 530 430 545 465 520 435 506 395 502 355Z" />
        <path fill="#8a8a8a" strokeWidth="3" d="M540 333L548 345 535 370 529 400 535 435 550 468 530 440 520 400 524 365Z" />
        {/* right bore */}
        <path fill="url(#wall)" d="M788 193L820 208 855 232 880 265 897 310 903 360 895 405 870 455 835 495 790 525 745 535 718 502 683 478 745 298 768 260Z" />
        <path fill="#8f8f8f" strokeWidth="3" d="M792 195L825 208 858 235 884 270 898 320 903 360 893 410 868 455 888 400 890 350 880 300 860 262 830 232 786 210Z" />
        <path fill="#d4d4d4" strokeWidth="3" d="M768 260L805 278 838 312 862 355 872 400 868 432 850 470 815 512 770 530 805 490 828 450 835 405 825 355 800 318 748 290Z" />
        <path fill="#8f8f8f" strokeWidth="3" d="M748 290L780 300 808 322 828 360 836 405 828 450 805 492 745 535 795 490 815 450 822 405 815 365 795 332 768 308 745 300Z" />
        {/* rim */}
        <path fill="#d4d4d4" d="M480 238L523 262 517 290 505 318 498 350 503 385 518 430 555 480 600 515 650 535 700 542 740 540 790 525 835 495 870 455 895 405 903 360 897 310 880 265 855 232 820 208 788 193 810 165 860 198 898 240 925 295 937 340 937 400 918 450 895 495 850 535 805 560 750 573 695 575 640 566 580 545 535 505 490 455 470 410 457 360 457 310 466 270Z" />
        <path fill="#8a8a8a" strokeWidth="3" d="M510 260L523 267 517 292 505 320 500 352 506 390 520 432 540 462 520 445 500 410 490 370 490 330 498 298 508 275Z" />
        <path strokeWidth="3" d="M540 462L570 495 610 522 655 537 705 544 770 530" />
        <path strokeWidth="2" d="M583 547L502 775M465 285L497 250M460 335L500 297M415 420L500 340M408 483L515 372M438 500L480 458M467 515L500 485M148 375L187 333M176 392L200 370M328 470L360 438M355 488L388 455M753 298L772 272M720 370L748 342M695 438L740 395" />
        {/* counterbored hole */}
        <path fill="#5c5c5c" d="M883 752L895 715 925 687 960 678 1005 685 1040 712 1052 752 1040 795 1010 822 970 832 925 818 895 790Z" />
        <path fill="#d4d4d4" strokeWidth="3" d="M886 748L905 722 940 709 980 710 1015 728 1038 765 1040 797 1010 822 970 832 925 818 895 790Z" />
        <path fill="#5c5c5c" strokeWidth="3" d="M902 770L915 745 950 731 985 737 1008 762 1013 795 1000 825 970 832 925 818 905 795Z" />
        <path fill="#fff" strokeWidth="3" d="M903 785L925 765 955 760 985 772 1003 800 1000 828 970 832 925 818 905 797Z" />
        <path strokeWidth="2" d="M1003 690L995 718M983 740L978 765" />
      </g>
    </g>
  )
}

const sideRows = [768, 783, 805, 820, 842, 857, 879, 894, 916, 931, 953, 968, 990]
const sideLabels = [['借通用件登记', 779], ['描　图', 816], ['校　描', 853], ['旧底图总号', 890], ['签　字', 927], ['日　期', 963]]
const blockLabels = [
  ['标记', 1407, 943], ['处数', 1424, 943], ['更改文件号', 1453, 943], ['签 字', 1491, 943], ['日期', 1518, 943],
  ['设 计', 1415, 955], ['校 对', 1415, 966], ['审 核', 1415, 976], ['批 准', 1415, 987],
  ['图样标记', 1693, 929], ['重 量', 1742, 929], ['比 例', 1774, 929], ['共　页', 1693, 957], ['第　页', 1758, 957]
]

function DrawingSheet() {
  return (
    <svg viewBox="361 206 1557 802" className="block h-full w-full" fill="none" role="img" aria-label="图纸页 A3_1" fontFamily="'Noto Sans CJK SC', sans-serif">
      <path d="M887.500 354.500H1801.500V1001.500H887.500Z" stroke="#8cff8c" />
      <path d="M887.500 354.500V1001.500" stroke="#30ff30" />
      <path d={sideRows.map((y) => `M888 ${y}.5H941`).join('')} stroke="#70ff70" />
      <path d="M1790.500 892V365.500H941.500V990H1398" stroke="#19ff19" strokeWidth="1.500" />
      <path d="M942 387.500H1064.500V366" stroke="#19ff19" />
      <g fill="#ffec80" fontSize="9" textAnchor="middle">
        {sideLabels.map(([t, y]) => <text key={t} x="914" y={y}>{t}</text>)}
        <text x="1694" y="462">其余</text>
      </g>
      <path d="M1722 441L1709 465 1703 453.500H1715" stroke="#1414d8" strokeWidth="1.200" />

      <g fontFamily="'Liberation Mono', monospace" fill="#ab7954">
        <text x="1122" y="400" fontSize="14">SECTION A-A</text>
        <text x="1569" y="555" fontSize="13">VIEW</text>
        <text x="1610" y="555" fontSize="17">B</text>
      </g>
      <SectionAA />
      <TopView />
      <Isometric />

      {/* title block */}
      <path d="M1398.500 892V990M1416.500 892V947M1432.500 892V990M1475.500 892V990M1507.500 892V947M1529.500 892V990M1660.500 892V990M1790.500 892V990M1398 892H1791M1398 936H1529M1398 947H1529M1398 990H1791M1660 920H1791M1660 931H1791M1660 949H1791M1660 959H1791M1725.500 920V959M1758.500 920V949M1677.500 931V949M1694.500 931V949M1710.500 931V949M1529 949.500H1660" stroke="#c8c8c8" strokeWidth="1.300" />
      <path d="M1398 903H1529M1398 914H1529M1398 925H1529M1398 958H1529M1398 968.500H1529M1398 979H1529" stroke="#dcdcdc" strokeWidth="1.300" />
      <g fill={BROWN} fontSize="7" textAnchor="middle">
        {blockLabels.map(([t, x, y]) => <text key={t + y} x={x} y={y}>{t}</text>)}
        <text x="1725" y="978" fontSize="9">西门子产品管理软件(上海)有限公司</text>
      </g>

      <path d="M704 888H718" stroke="#f8a04a" strokeWidth="5" />
      <path d="M718 889V901M718 994V1008" stroke="#000" strokeWidth="2" />
      <text x="370" y="1003" fontSize="13" fontFamily="'Liberation Sans', sans-serif" fill="#f8a04a">"A3_1"</text>
    </svg>
  )
}

function DocumentArea() {
  return (
    <main className="relative flex min-w-0 flex-1 flex-col">
      <div className="flex h-[25px] shrink-0">
        <div className="flex w-[141px] items-center bg-[#005f87] pl-[7px] text-[12px] text-white">
          <Ico w={14} h={15} stroke="#222" sw={1.4} className="bg-[#d8d8d8]"><path d="M1 4V2h12M1 5h10v9H1z" /><circle cx="6" cy="10" r="3" /><path d="M12 0v4" /></Ico>
          <span className="ml-[6px] flex-1">bush_part.prt</span>
          <Ico w={10} h={12} stroke="#fff" sw={1.6}><path d="M7 1H1v10h8V8M4 6h3M6 3l3 3-3 2" /></Ico>
          <button type="button" aria-label="关闭部件" className="mr-[5px] ml-[6px]"><X size={11} strokeWidth={4} color="#b9c7ce" /></button>
        </div>
      </div>
      <div className="h-[2px] shrink-0 bg-[#005f87]" />
      <div className="mr-px mb-px min-h-0 flex-1 border border-[#7c7c7c]"><DrawingSheet /></div>

      <div className="absolute top-9 left-[743px] flex h-[30px] w-[74px] items-center border-b border-[#dcdcdc] bg-white pb-1">
        <Tool label="捕捉方式" className="w-12 gap-2 pl-3">
          <Ico w={22} sw={1.2}><circle cx="11" cy="11" r="9" /><path d="M11 0v7M11 15v7M0 11h7M15 11h7M9 5l2 2 2-2M9 17l2-2 2 2M5 9l2 2-2 2M17 9l-2 2 2 2" /><path d="M11 7.500l3.500 3.500-3.500 3.500L7.500 11z" fill={O} stroke="none" /></Ico>
          <Caret />
        </Tool>
        <span className="ml-[9px] h-[26px] w-px bg-[#dcdcdc]" />
        <Tool label="更多捕捉" className="mt-3 w-[15px]"><Caret /></Tool>
      </div>
      <SectionDialog />
    </main>
  )
}

/* ---------- input method bar ---------- */
function ImeBar() {
  return (
    <div className="absolute bottom-0 left-[1156px] flex h-[25px] items-center rounded-xs border border-[#b9cfea] bg-white text-[#1465d8]">
      <Ico w={31} h={29} stroke="none" className="-mt-1"><path d="M3 4l23-4 4 22-24 6-6-15z" fill="#fa5f2a" /><path d="M24 7c-7-2-14-1-14 3s14 2 14 7-8 6-15 3" stroke="#fff" strokeWidth="4" /></Ico>
      <Tool label="中英文" className="w-6"><span className="text-[18px] leading-5">A</span></Tool>
      <Tool label="标点" className="w-6"><Ico w={12} stroke="none"><circle cx="2" cy="4" r="2" fill="#1465d8" /><path d="M8 6h3c0 3-1 4-3 5z" fill="#1465d8" /></Ico></Tool>
      <Tool label="语音输入" className="w-6"><Mic size={16} strokeWidth={2.4} fill="#1465d8" /></Tool>
      <Tool label="软键盘" className="w-6"><Keyboard size={17} strokeWidth={2.6} /></Tool>
      <Tool label="皮肤" className="relative w-6"><Shirt size={15} fill="#d85ad0" color="#9a5ae8" /><span className="absolute top-0 right-0 size-[5px] rounded-full bg-[#f04a3a]" /></Tool>
      <Tool label="游戏" className="w-6"><Gamepad2 size={18} strokeWidth={2.8} /></Tool>
      <Tool label="工具箱" className="w-6"><Ico w={14} stroke="none"><path d="M0 0h6v6H0zM8 0h6v6H8zM0 8h6v6H0zM8 8h6v6H8z" fill="#1465d8" /></Ico></Tool>
      <Tool label="输入法设置" className="w-6"><Settings size={16} strokeWidth={3.4} /></Tool>
    </div>
  )
}

export default function App() {
  return (
    <div className="relative flex h-screen flex-col overflow-hidden bg-white font-['Noto_Sans','Noto_Sans_CJK_SC',sans-serif] text-[#111]">
      <div className="shrink-0 bg-linear-to-r from-[#00628b] to-[#007ba7]">
        <TitleBar />
        <MenuBar />
      </div>
      <Ribbon />
      <SelectionBar />
      <div className="flex min-h-0 flex-1 border-t border-[#a8a8a8]">
        <ResourceBar />
        <Navigator />
        <DocumentArea />
      </div>
      <footer className="flex h-[21px] shrink-0 items-center border-t border-[#a8a8a8] bg-white pl-[3px] text-[11px] font-bold">
        指定点作为截面线段位置
      </footer>
      <div className="pointer-events-none absolute right-1 bottom-3 text-[37px] leading-[48px] text-[#c4c4c4]/70 [text-shadow:1px_1px_1px_#777] font-['Noto_Sans_CJK_SC',sans-serif]">CSDN @山涧果子</div>
      <ImeBar />
    </div>
  )
}
